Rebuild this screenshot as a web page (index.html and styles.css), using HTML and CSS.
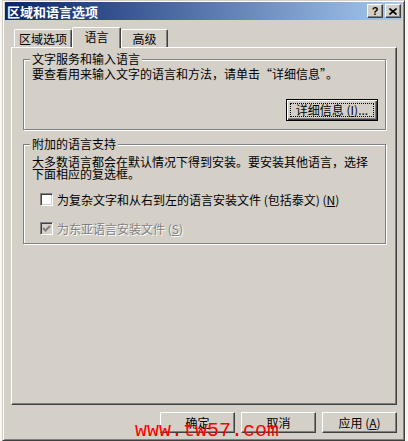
FILE: index.html
```html
<!DOCTYPE html>
<html lang="zh-CN">
<head>
<meta charset="utf-8">
<title>区域和语言选项</title>
<link rel="stylesheet" href="styles.css">
</head>
<body>
<div class="dialog">
  <div class="titlebar">
    <span class="title">区域和语言选项</span>
    <div class="caption-btns">
      <span class="cbtn help">?</span>
      <span class="cbtn close"><svg width="8" height="7" viewBox="0 0 8 7"><path d="M0.5 0.5 L7.5 6.5 M7.5 0.5 L0.5 6.5" stroke="#000" stroke-width="1.6" fill="none"/></svg></span>
    </div>
  </div>
  <div class="tabs">
    <div class="tab t1">区域选项</div>
    <div class="tab t2 active">语言</div>
    <div class="tab t3">高级</div>
  </div>
  <div class="panel">
    <div class="group g1">
      <div class="legend">文字服务和输入语言</div>
      <p class="desc">要查看用来输入文字的语言和方法，请单击“详细信息”。</p>
      <div class="btn-row">
        <button class="btn default"><span class="focus">详细信息 (<u>I</u>)...</span></button>
      </div>
    </div>
    <div class="group g2">
      <div class="legend">附加的语言支持</div>
      <p class="text2">大多数语言都会在默认情况下得到安装。要安装其他语言，选择<br>下面相应的复选框。</p>
      <div class="check-row r1">
        <span class="cb"></span>
        <span class="lbl">为复杂文字和从右到左的语言安装文件 (包括泰文) (<u>N</u>)</span>
      </div>
      <div class="check-row r2">
        <span class="cb disabled"><svg width="11" height="11" viewBox="0 0 11 11"><polyline points="2,5 4.5,7.5 9,3" fill="none" stroke="#808080" stroke-width="2"/></svg></span>
        <span class="lbl disabled-text">为东亚语言安装文件 (<u>S</u>)</span>
      </div>
    </div>
  </div>
  <div class="actions">
    <button class="btn">确定</button>
    <button class="btn">取消</button>
    <button class="btn">应用 (<u>A</u>)</button>
  </div>
  <div class="watermark">www.tw57.com</div>
</div>
</body>
</html>
```
FILE: styles.css
```css
* { box-sizing: border-box; }

body {
  margin: 0;
  background: #f6f6f4;
  font-family: "Noto Sans CJK SC", "Noto Sans", sans-serif;
  font-size: 12px;
  color: #000;
}

.dialog {
  position: relative;
  margin-left: 2px;
  width: 403px;
  height: 441px;
  background: #d4d0c8;
  border: 1px solid;
  border-color: #d4d0c8 #404040 #404040 #d4d0c8;
  box-shadow: inset 1px 1px 0 #fff, inset -1px -1px 0 #808080;
  padding: 1px 2px 2px 2px;
}

.titlebar {
  height: 18px;
  display: flex;
  align-items: center;
  justify-content: space-between;
  background: linear-gradient(to right, #0a246a, #a6caf0);
  padding: 0 1px 0 2px;
}

.title {
  color: #fff;
  font-weight: bold;
  font-size: 13px;
  line-height: 18px;
  padding-top: 1px;
}

.caption-btns {
  display: flex;
  gap: 2px;
}

.cbtn {
  width: 16px;
  height: 14px;
  background: #d4d0c8;
  border: 1px solid;
  border-color: #fff #404040 #404040 #fff;
  box-shadow: inset -1px -1px 0 #808080;
  display: flex;
  align-items: center;
  justify-content: center;
}

.help {
  font-family: "Liberation Sans", sans-serif;
  font-weight: bold;
  font-size: 11px;
  line-height: 12px;
}

.tabs {
  display: flex;
  align-items: flex-end;
  height: 20px;
  margin: 7px 0 0 9px;
  position: relative;
  z-index: 1;
}

.tab {
  height: 18px;
  background: #d4d0c8;
  border: 1px solid;
  border-bottom: none;
  border-color: #fff #404040 transparent #fff;
  box-shadow: inset -1px 0 0 #808080;
  border-radius: 2px 2px 0 0;
  display: flex;
  align-items: center;
  justify-content: center;
  line-height: 14px;
}

.t1 { width: 58px; }
.t2 { width: 49px; }
.t3 { width: 47px; }

.tab.active {
  height: 21px;
  margin-bottom: -1px;
  padding-bottom: 2px;
}

.panel {
  margin: 0 5px 0 6px;
  height: 358px;
  border: 1px solid;
  border-color: #fff #404040 #404040 #fff;
  box-shadow: inset -1px -1px 0 #808080;
  padding: 11px 10px 0 11px;
}

.group {
  border: 1px solid #808080;
  box-shadow: inset 1px 1px 0 #fff, 1px 1px 0 #fff;
  padding: 0 8px;
}

.g1 { height: 71px; }
.g2 { height: 100px; margin-top: 14px; }

.legend {
  display: table;
  margin: -8px 0 0 -2px;
  padding: 0 2px;
  line-height: 14px;
  background: #d4d0c8;
}

.desc {
  margin: 2px 0 0;
  line-height: 12px;
  white-space: nowrap;
}

.btn-row {
  display: flex;
  justify-content: flex-end;
  margin: 19px -1px 0 0;
}

.btn {
  width: 75px;
  height: 21px;
  padding: 0;
  margin: 0;
  background: #d4d0c8;
  border: 1px solid;
  border-color: #fff #404040 #404040 #fff;
  box-shadow: inset -1px -1px 0 #808080;
  font-family: "Noto Sans CJK SC", sans-serif;
  font-size: 12px;
  line-height: 14px;
  color: #000;
  display: flex;
  align-items: center;
  justify-content: center;
  white-space: pre;
}

.btn.default {
  width: 92px;
  height: 22px;
  border: 1px solid #000;
  box-shadow: inset 1px 1px 0 #fff, inset -1px -1px 0 #404040, inset -2px -2px 0 #808080;
  padding: 3px;
  align-items: stretch;
}

.focus {
  flex: 1;
  border: 1px dotted #000;
  display: flex;
  align-items: center;
  justify-content: center;
  white-space: pre;
}

.text2 {
  margin: 5px 0 0;
  line-height: 12px;
  white-space: nowrap;
}

.check-row {
  display: flex;
  align-items: center;
  gap: 4px;
  height: 13px;
  margin-left: 8px;
  line-height: 13px;
  white-space: nowrap;
}

.r1 { margin-top: 13px; }
.r2 { margin-top: 16px; }

.cb {
  flex: none;
  width: 13px;
  height: 13px;
  background: #fff;
  border: 1px solid;
  border-color: #808080 #fff #fff #808080;
  box-shadow: inset 1px 1px 0 #404040, inset -1px -1px 0 #d4d0c8;
  display: flex;
  align-items: center;
  justify-content: center;
}

.cb.disabled { background: #d4d0c8; }

.lbl { white-space: pre; }

.disabled-text {
  color: #808080;
  text-shadow: 1px 1px 0 #fff;
}

.actions {
  display: flex;
  justify-content: flex-end;
  gap: 6px;
  margin: 7px 5px 0 0;
}

.watermark {
  position: absolute;
  left: 132px;
  top: 420px;
  font-family: "Liberation Mono", monospace;
  font-size: 20px;
  line-height: 20px;
  color: #ff0000;
  z-index: 2;
}
```
